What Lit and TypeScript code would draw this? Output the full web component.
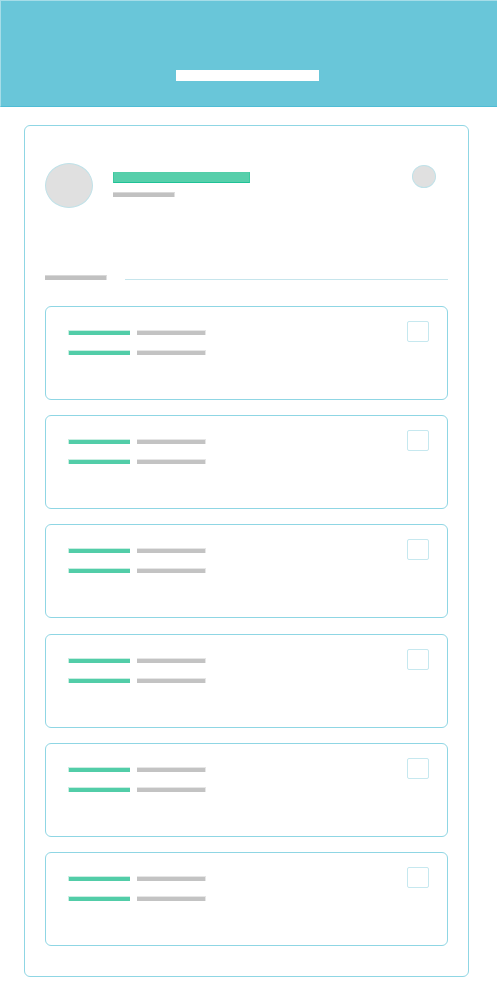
import { LitElement, html, css } from "lit";
import { customElement, property } from "lit/decorators.js";

@customElement("list-card")
class ListCard extends LitElement {
  @property({ type: Number }) index = 1;

  static styles = css`
    :host {
      display: flex;
      justify-content: space-between;
      align-items: flex-start;
      box-sizing: border-box;
      height: 94px;
      padding: 14px 18px 14px 22px;
      border: 1px solid #8fd6e4;
      border-radius: 6px;
    }
    .rows {
      display: grid;
      grid-template-columns: 62px 69px;
      column-gap: 7px;
      row-gap: 15px;
      padding-top: 9px;
    }
    .bar {
      box-sizing: border-box;
      height: 5px;
      border-top: 1px solid #e6e6e6;
      border-right: 1px solid #e6e6e6;
      background: #c3c3c3;
    }
    .key {
      border-right: 0;
      border-left: 1px solid #c9eee2;
      border-top-color: #c9eee2;
      background: #52cda8;
    }
    .check {
      appearance: none;
      box-sizing: border-box;
      width: 22px;
      height: 21px;
      margin: 0;
      border: 1px solid #c6e8ef;
      border-radius: 2px;
      background: #fff;
    }
    .check:checked {
      background: #54cea9;
    }
  `;

  render() {
    return html`
      <div class="rows">
        <div class="bar key"></div>
        <div class="bar"></div>
        <div class="bar key"></div>
        <div class="bar"></div>
      </div>
      <input class="check" type="checkbox" aria-label="Select item ${this.index}" />
    `;
  }
}

@customElement("app-root")
class AppRoot extends LitElement {
  static styles = css`
    :host {
      display: flex;
      flex-direction: column;
      box-sizing: border-box;
      min-height: 100vh;
      padding-bottom: 23px;
      background: #fff;
      font-family: "Liberation Sans", sans-serif;
    }
    .top {
      display: flex;
      justify-content: center;
      box-sizing: border-box;
      height: 107px;
      padding: 69px 4px 0 0;
      border-top: 1px solid #a6dde8;
      border-left: 1px solid #a6dde8;
      border-bottom: 1px solid #4fbcd5;
      background: #69c6d9;
    }
    .heading {
      width: 143px;
      height: 11px;
      background: #fff;
    }
    .panel {
      display: flex;
      flex: 1;
      flex-direction: column;
      margin: 18px 28px 0 24px;
      padding: 37px 20px 30px;
      border: 1px solid #8fd6e4;
      border-radius: 6px;
    }
    .profile {
      display: flex;
      align-items: flex-start;
    }
    .avatar {
      box-sizing: border-box;
      width: 48px;
      height: 45px;
      border: 1px solid #bfe1e8;
      border-radius: 50%;
      background: #e0e0e0;
    }
    .lines {
      flex: 1;
      padding: 9px 0 0 20px;
    }
    .name {
      box-sizing: border-box;
      width: 137px;
      height: 11px;
      border: 1px solid #3bc9a0;
      border-top-color: #54cea9;
      border-bottom-color: #1ec296;
      background: #57cfab;
    }
    .role,
    .label {
      box-sizing: border-box;
      width: 62px;
      height: 5px;
      border-top: 1px solid #d8d8d8;
      border-right: 1px solid #e0e0e0;
      background: #c1c1c1;
    }
    .role {
      margin-top: 9px;
    }
    .action {
      box-sizing: border-box;
      width: 24px;
      height: 23px;
      margin: 2px 12px 0 0;
      padding: 0;
      border: 1px solid #bfe1e8;
      border-radius: 50%;
      background: #e0e0e0;
    }
    .section {
      display: flex;
      align-items: flex-end;
      gap: 18px;
      margin: 67px 0 26px;
    }
    .rule {
      flex: 1;
      height: 1px;
      margin: 0;
      border: 0;
      background: #c6e5ec;
    }
    .list {
      display: flex;
      flex: 1;
      flex-direction: column;
      justify-content: space-between;
      gap: 15px;
    }
  `;

  render() {
    return html`
      <header class="top"><div class="heading"></div></header>
      <main class="panel">
        <div class="profile">
          <div class="avatar"></div>
          <div class="lines">
            <div class="name"></div>
            <div class="role"></div>
          </div>
          <button class="action" type="button" aria-label="Options"></button>
        </div>
        <div class="section">
          <div class="label"></div>
          <hr class="rule" />
        </div>
        <div class="list">
          ${[1, 2, 3, 4, 5, 6].map((n) => html`<list-card .index=${n}></list-card>`)}
        </div>
      </main>
    `;
  }
}
